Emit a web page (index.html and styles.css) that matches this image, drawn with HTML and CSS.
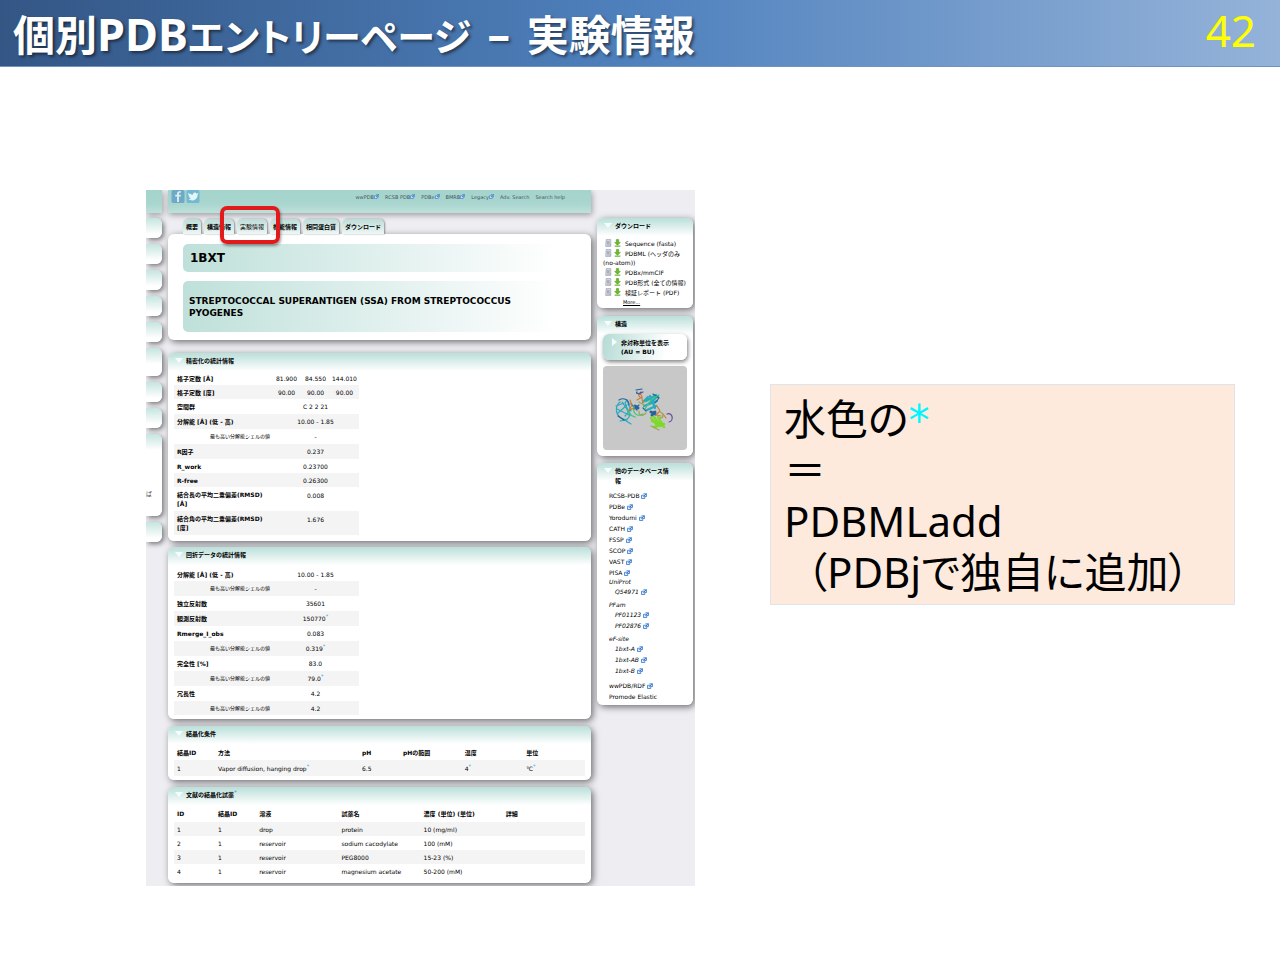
FILE: index.html
```html
<!DOCTYPE html>
<html lang="ja">
<head>
<meta charset="utf-8">
<title>個別PDBエントリーページ – 実験情報</title>
<link rel="stylesheet" href="styles.css">
</head>
<body>
<svg class="defs" aria-hidden="true">
  <symbol id="ext" viewBox="0 0 12 12"><path d="M1 4.500h6.500V11H1zM4.500 7.500 10.500 1.500M5 1.500h6V7H7.500" fill="#dcecff" stroke="#2a6fc4" stroke-width="1.500"/></symbol>
  <symbol id="doc" viewBox="0 0 12 14"><path d="M2 1h8v12H1z" fill="#dfe1ea" stroke="#8b8f9e"/><path d="M3 4h5M3 6h5M3 8h5M3 10.500h7" stroke="#7a8092"/></symbol>
  <symbol id="down" viewBox="0 0 12 14"><path d="M4 1h4v5h3L6 11 1 6h3z" fill="#6cba25" stroke="#4d9a17"/><path d="M1 12.500h10" stroke="#63ad25" stroke-width="2"/></symbol>
</svg>
<header class="bar">
  <h1>個別<span class="latin">PDB</span><span class="kana">エントリーページ</span><span class="latin dash"> – </span>実験情報</h1>
  <span class="num">42</span>
</header>
<main class="slide">
  <section class="shot">
    <div class="left">
      <div class="banner"></div>
      <div class="stub first"></div><div class="stub"></div><div class="stub"></div><div class="stub"></div><div class="stub"></div>
      <div class="stub mid"></div><div class="stub"></div><div class="stub"></div>
      <div class="stub long">ば</div><div class="stub"></div>
    </div>
    <div class="center">
      <div class="banner">
        <div class="social">
          <svg viewBox="0 0 14 14"><rect width="14" height="14" rx="2" fill="#6fa9c8"/><path d="M8 13V7h2V5H8V4c0-1 1-1 2-1V1C7 1 6 2 6 4v1H4v2h2v6" fill="#d9f0f2"/></svg>
          <svg viewBox="0 0 14 14"><rect width="14" height="14" rx="2" fill="#74b9d4"/><path d="M2 3c2 2 3 2 5 2 0-3 3-3 4-1l2-1-1 2c0 5-5 8-10 5 1 0 2 0 3-1-2 0-2-1-2-2C2 6 2 5 2 3" fill="#e4f6f7"/></svg>
        </div>
        <nav class="top">
          <a href="#">wwPDB<svg><use href="#ext"/></svg></a><a href="#">RCSB PDB<svg><use href="#ext"/></svg></a><a href="#">PDBe<svg><use href="#ext"/></svg></a><a href="#">BMRB<svg><use href="#ext"/></svg></a><a href="#">Legacy<svg><use href="#ext"/></svg></a><a href="#">Adv. Search</a><a href="#">Search help</a>
        </nav>
      </div>
      <nav class="tabs">
        <a href="#">概要</a><a href="#">構造情報</a><a href="#" class="on">実験情報<span class="ring"></span></a><a href="#">機能情報</a><a href="#">相同蛋白質</a><a href="#">ダウンロード</a>
      </nav>
      <div class="panel entry">
        <h2>1BXT</h2>
        <h3>STREPTOCOCCAL SUPERANTIGEN (SSA) FROM STREPTOCOCCUS PYOGENES</h3>
      </div>
      <section class="panel refine">
        <h4>精密化の統計情報</h4>
        <table class="stats">
          <colgroup><col class="lab"><col class="val"><col class="val"><col class="val"></colgroup>
          <tr class="short"><th>格子定数 [Å]</th><td>81.900</td><td>84.550</td><td>144.010</td></tr>
          <tr class="short"><th>格子定数 [度]</th><td>90.00</td><td>90.00</td><td>90.00</td></tr>
          <tr><th>空間群</th><td colspan="3">C 2 2 21</td></tr>
          <tr><th>分解能 [Å] (低 - 高)</th><td colspan="3">10.00 - 1.85</td></tr>
          <tr><th class="sub">最も高い分解能シェルの値</th><td colspan="3">-</td></tr>
          <tr><th>R因子</th><td colspan="3">0.237</td></tr>
          <tr class="short"><th>R_work</th><td colspan="3">0.23700</td></tr>
          <tr class="short"><th>R-free</th><td colspan="3">0.26300</td></tr>
          <tr class="tall"><th>結合長の平均二乗偏差(RMSD) [Å]</th><td colspan="3">0.008</td></tr>
          <tr class="tall"><th>結合角の平均二乗偏差(RMSD) [度]</th><td colspan="3">1.676</td></tr>
        </table>
      </section>
      <section class="panel diff">
        <h4>回折データの統計情報</h4>
        <table class="stats">
          <colgroup><col class="lab"><col class="wide"></colgroup>
          <tr class="short"><th>分解能 [Å] (低 - 高)</th><td>10.00 - 1.85</td></tr>
          <tr><th class="sub">最も高い分解能シェルの値</th><td>-</td></tr>
          <tr><th>独立反射数</th><td>35601</td></tr>
          <tr><th>観測反射数</th><td>150770<sup>*</sup></td></tr>
          <tr><th>Rmerge_I_obs</th><td>0.083</td></tr>
          <tr><th class="sub">最も高い分解能シェルの値</th><td>0.319<sup>*</sup></td></tr>
          <tr><th>完全性 [%]</th><td>83.0</td></tr>
          <tr><th class="sub">最も高い分解能シェルの値</th><td>79.0<sup>*</sup></td></tr>
          <tr><th>冗長性</th><td>4.2</td></tr>
          <tr class="short"><th class="sub">最も高い分解能シェルの値</th><td>4.2</td></tr>
        </table>
      </section>
      <section class="panel cond">
        <h4>結晶化条件</h4>
        <table class="list">
          <colgroup><col class="c10"><col class="c35"><col class="c10"><col class="c15"><col class="c15"><col class="c15"></colgroup>
          <tr><th>結晶ID</th><th>方法</th><th>pH</th><th>pHの範囲</th><th>温度</th><th>単位</th></tr>
          <tr><td>1</td><td>Vapor diffusion, hanging drop<sup>*</sup></td><td>6.5</td><td></td><td>4<sup>*</sup></td><td>℃<sup>*</sup></td></tr>
        </table>
      </section>
      <section class="panel agent">
        <h4>文献の結晶化試薬<sup>*</sup></h4>
        <table class="list dense">
          <colgroup><col class="c10"><col class="c10"><col class="c20"><col class="c20"><col class="c20"><col class="c20"></colgroup>
          <tr class="head"><th>ID</th><th>結晶ID</th><th>溶液</th><th>試薬名</th><th>濃度 (単位) (単位)</th><th>詳細</th></tr>
          <tr><td>1</td><td>1</td><td>drop</td><td>protein</td><td>10 (mg/ml)</td><td></td></tr>
          <tr><td>2</td><td>1</td><td>reservoir</td><td>sodium cacodylate</td><td>100 (mM)</td><td></td></tr>
          <tr><td>3</td><td>1</td><td>reservoir</td><td>PEG8000</td><td>15-23 (%)</td><td></td></tr>
          <tr><td>4</td><td>1</td><td>reservoir</td><td>magnesium acetate</td><td>50-200 (mM)</td><td></td></tr>
        </table>
      </section>
    </div>
    <aside class="side">
      <section class="panel dl">
        <h4>ダウンロード</h4>
        <ul>
          <li><svg><use href="#doc"/></svg><svg><use href="#down"/></svg><a href="#">Sequence (fasta)</a></li>
          <li><svg><use href="#doc"/></svg><svg><use href="#down"/></svg><a href="#">PDBML (ヘッダのみ<br>(no-atom))</a></li>
          <li><svg><use href="#doc"/></svg><svg><use href="#down"/></svg><a href="#">PDBx/mmCIF</a></li>
          <li><svg><use href="#doc"/></svg><svg><use href="#down"/></svg><a href="#">PDB形式 (全ての情報)</a></li>
          <li><svg><use href="#doc"/></svg><svg><use href="#down"/></svg><a href="#">検証レポート (PDF)</a></li>
        </ul>
        <a class="more" href="#">More...</a>
      </section>
      <section class="panel struct">
        <h4>構造</h4>
        <button type="button">非対称単位を表示<br>(AU = BU)</button>
        <svg class="mol" viewBox="0 0 84 84" fill="none" stroke-width="1.200" stroke-linecap="round">
          <g stroke="#2aa9bf"><path d="M17 36c-5 4-5 12 1 16s10-1 8-6-6-8-2-12l4 11M14 43l12 6M19 36l9 13M20 53l8 5M15 47l9-8M22 50l6-7M13 40l8-3M17 55l7-1"/><path d="M43 35l10-6M41 40l13-5M44 44l9-4M47 30l5 12M40 36l5-5M46 38l9-8" stroke-width="2.200"/></g>
          <g stroke="#23649c"><path d="M16 34c5-3 10 0 10 5M15 50l6 4M50 28l6 4-4 5M33 24l6-1M34 26c-2 2 3 2 4 0M40 42l3 3M28 38l6 6M31 43l5-4"/><path d="M48 46l4 2M49 49l3-3M32 40l3 2" stroke-width="3"/></g>
          <g stroke="#36c878"><path d="M42 43c4-8 8-12 14-14M31 40c-2 8 4 11 9 8M24 44c4 8 6 5 8 7"/></g>
          <g stroke="#c9803c"><path d="M27 34l2 5-3 5 5-2M37 31c-4-3 2-5 2 1s3 2 1 5M54 40l3 5-4 4 5 1M60 48l3 4M34 34l5-3"/></g>
          <g stroke="#7fda28"><path d="M48 52l6 7M51 51l7 9M55 51l6 10M49 55l11 3M51 61l10-3" stroke-width="2.400"/></g>
          <g stroke="#9aa84c"><path d="M36 45c0 6 4 5 7 2M57 52c4 0 4-5 0-6M48 60l8 4M36 36l5 3"/></g>
          <path d="M64 48c6-2 7 7 2 8M36 28l4-2" stroke="#684a98"/>
        </svg>
      </section>
      <section class="panel db">
        <h4>他のデータベース情報</h4>
        <ul>
          <li><a href="#">RCSB-PDB <svg><use href="#ext"/></svg></a></li>
          <li><a href="#">PDBe <svg><use href="#ext"/></svg></a></li>
          <li><a href="#">Yorodumi <svg><use href="#ext"/></svg></a></li>
          <li><a href="#">CATH <svg><use href="#ext"/></svg></a></li>
          <li><a href="#">FSSP <svg><use href="#ext"/></svg></a></li>
          <li><a href="#">SCOP <svg><use href="#ext"/></svg></a></li>
          <li><a href="#">VAST <svg><use href="#ext"/></svg></a></li>
          <li><a href="#">PISA <svg><use href="#ext"/></svg></a></li>
          <li class="grp">UniProt<ul><li><a href="#">Q54971 <svg><use href="#ext"/></svg></a></li></ul></li>
          <li class="grp">PFam<ul><li><a href="#">PF01123 <svg><use href="#ext"/></svg></a></li><li><a href="#">PF02876 <svg><use href="#ext"/></svg></a></li></ul></li>
          <li class="grp">eF-site<ul><li><a href="#">1bxt-A <svg><use href="#ext"/></svg></a></li><li><a href="#">1bxt-AB <svg><use href="#ext"/></svg></a></li><li><a href="#">1bxt-B <svg><use href="#ext"/></svg></a></li></ul></li>
          <li><a href="#">wwPDB/RDF <svg><use href="#ext"/></svg></a></li>
          <li><a href="#">Promode Elastic</a></li>
        </ul>
      </section>
    </aside>
  </section>
  <aside class="note">
    <p>水色の<span class="star">*</span></p>
    <p>＝</p>
    <p>PDBMLadd</p>
    <p class="paren">（PDBjで独自に追加）</p>
  </aside>
</main>
</body>
</html>
```
FILE: styles.css
```css
* { box-sizing: border-box; }
body {
  margin: 0;
  min-height: 100vh;
  background: #fff;
  color: #000;
  font-family: "Noto Sans", "Noto Sans CJK JP", sans-serif;
}
h1, h2, h3, h4, p, ul { margin: 0; padding: 0; }
ul { list-style: none; }
a { color: inherit; text-decoration: none; }
.defs { display: none; }

.bar {
  display: flex;
  justify-content: space-between;
  height: 67px;
  padding: 0 24px 0 13px;
  background: linear-gradient(90deg, #335685 0%, #4f81bd 50%, #95b3d9 100%);
  border-bottom: 1px solid #6f93c2;
}
.bar h1 {
  color: #fff;
  font-size: 42px;
  line-height: 70px;
  font-weight: 700;
  font-feature-settings: "palt";
  text-shadow: 2px 2px 3px rgba(0, 0, 0, .5);
  white-space: nowrap;
}
.latin { font-size: 45px; line-height: 1; }
.kana { font-size: 38px; line-height: 1; }
.dash { padding: 0 5px; }
.num { color: #ff0; font-size: 44px; line-height: 60px; }

.slide {
  display: grid;
  grid-template-columns: 549fr 465fr;
  column-gap: 75px;
  align-items: start;
  padding: 123px 45px 0 146px;
}

/* Captured entry page */
.shot {
  display: grid;
  grid-template-columns: 16fr 423fr 96fr;
  column-gap: 6px;
  height: 696px;
  padding-right: 2px;
  overflow: hidden;
  background: #eeedf2;
  font: 6px/9px "DejaVu Sans", "Noto Sans CJK JP", sans-serif;
}
.banner {
  height: 23px;
  background: linear-gradient(#a3d4cc 0%, #a9d6cf 60%, #bfe0db 100%);
  box-shadow: 1px 2px 6px rgba(0, 0, 0, .35);
}
.left { display: flex; flex-direction: column; gap: 6px; }
.stub {
  height: 20px;
  border-radius: 0 6px 6px 0;
  background: linear-gradient(#c5e4df, #fff 16px);
  box-shadow: 2px 2px 5px rgba(0, 0, 0, .5);
}
.stub.first { margin-top: -1px; }
.stub.mid { height: 28px; }
.stub.long { height: 82px; padding-top: 55px; color: #444; }

.center .banner { display: flex; justify-content: space-between; padding-right: 26px; }
.social { display: flex; gap: 1px; padding-left: 3px; }
.social svg { width: 14px; height: 13px; }
.top { display: flex; gap: 6px; padding-top: 3px; color: #456; font-size: 5px; }
.top svg { width: 5px; height: 5px; }

.tabs { display: flex; gap: 3px; margin-top: 6px; padding-left: 15px; }
.tabs a {
  height: 15px;
  padding: 0 3px;
  border-radius: 5px 5px 0 0;
  background: linear-gradient(#bcdcd7, #eef7f5);
  box-shadow: 1px 0 2px rgba(0, 0, 0, .4);
  line-height: 15px;
  font-weight: 700;
  white-space: nowrap;
}
.tabs .on { position: relative; font-weight: 400; }
.ring {
  position: absolute;
  inset: -13px -13px -10px -17px;
  z-index: 2;
  border: 4px solid #e11b1b;
  border-radius: 7px;
  box-shadow: 1px 2px 3px rgba(0, 0, 0, .4);
}

.panel {
  border-radius: 6px;
  background: linear-gradient(#badfd9, #fff 18px);
  box-shadow: 2px 2px 7px rgba(0, 0, 0, .55);
}
.panel h4 {
  position: relative;
  padding: 3px 12px 0;
  font-size: 6px;
  line-height: 9px;
  font-weight: 700;
}
.panel h4::before {
  content: "";
  position: absolute;
  left: 1px;
  top: 5px;
  border: 4px solid transparent;
  border-top: 5px solid #f4fffd;
  border-bottom: 0;
}
.entry { margin-bottom: 13px; padding: 10px 15px 8px; background: #fff; }
.entry h2, .entry h3 {
  border-radius: 5px;
  background: linear-gradient(90deg, #bfe0da, #fff 95%);
}
.entry h2 { padding-left: 7px; font-size: 12px; line-height: 28px; }
.entry h3 { margin-top: 9px; padding: 14px 10% 13px 6px; font-size: 9px; line-height: 12px; }

.refine { margin-bottom: 6px; padding: 0 6px 6px; }
.diff { margin-bottom: 7px; padding: 0 6px 4px; }
.cond { margin-bottom: 7px; padding: 0 6px 4px; }
.agent { padding: 0 6px 5px; }
.center .panel h4 { margin-bottom: 6px; }
.center .diff h4 { margin-bottom: 8px; }
table { border-collapse: collapse; table-layout: fixed; }
th, td { padding: 0 3px; font-size: 6px; line-height: 9px; text-align: left; white-space: nowrap; }
sup { color: #2aa9d6; font-size: 5px; line-height: 1px; }

.stats { width: 45%; }
.stats tr { height: 15px; }
.stats .short { height: 14px; }
.stats .tall { height: 24px; }
.stats .tall th { white-space: normal; }
.stats .tall td { vertical-align: top; padding-top: 4px; }
.stats tr:nth-child(even) { background: #f4f4f4; }
.stats td { padding: 0; text-align: center; }
.stats .sub { padding-right: 2px; font-size: 5px; font-weight: 400; text-align: right; }
.lab { width: 53%; }

.list { width: 100%; }
.list tr { height: 16px; }
.dense tr { height: 14px; }
.dense .head { height: 17px; }
.list tr:nth-child(even) { background: #f4f4f4; }
.c10 { width: 10%; }
.c15 { width: 15%; }
.c20 { width: 20%; }
.c35 { width: 35%; }

.side { padding-top: 28px; }
.side h4 { line-height: 10px; }
.dl { height: 90px; padding: 0 6px; margin-bottom: 8px; }
.dl ul { padding-top: 8px; }
.dl li { margin-bottom: 1px; line-height: 9px; white-space: nowrap; }
.dl svg { width: 7px; height: 8px; margin-right: 2px; vertical-align: top; }
.dl li svg:first-child { margin-left: 2px; }
.dl li a { padding-left: 2px; }
.more { display: block; margin-left: 20px; font-size: 5px; text-decoration: underline; }
.struct { padding: 0 6px 6px; margin-bottom: 7px; }
.struct button {
  position: relative;
  display: block;
  width: 100%;
  height: 26px;
  margin: 5px 0 6px;
  padding: 0 0 0 18px;
  border: 0;
  border-radius: 6px;
  background: linear-gradient(100deg, #b5dbd5, #fff 75%);
  box-shadow: 1px 2px 4px rgba(0, 0, 0, .5);
  color: #000;
  font: 700 6px/9px "DejaVu Sans", "Noto Sans CJK JP", sans-serif;
  text-align: left;
}
.struct button::before {
  content: "";
  position: absolute;
  left: 9px;
  top: 4px;
  border: 4px solid transparent;
  border-left: 5px solid #f4fffd;
  border-right: 0;
}
.mol { display: block; width: 100%; border-radius: 4px; background: #c8c8c8; }
.db { padding: 0 12px 3px; }
.panel.db h4 { padding: 3px 10px 0 6px; }
.panel.db h4::before { left: -5px; }
.db > ul { padding-top: 4px; }
.db li { line-height: 11px; white-space: nowrap; }
.db svg { width: 6px; height: 6px; vertical-align: middle; }
.db .grp { margin-bottom: 4px; line-height: 8px; font-style: italic; }
.grp ul { padding-left: 6px; }

/* Callout */
.note {
  margin-top: 194px;
  padding: 8px 12px 7px 13px;
  border: 1px solid #dfe3ea;
  background: #fdeadd;
  font-size: 42px;
  line-height: 51px;
  font-feature-settings: "palt";
  white-space: nowrap;
}
.star { color: #00f6ff; font-family: "DejaVu Sans", sans-serif; line-height: 1; }
.paren { padding-left: 22px; }
```
